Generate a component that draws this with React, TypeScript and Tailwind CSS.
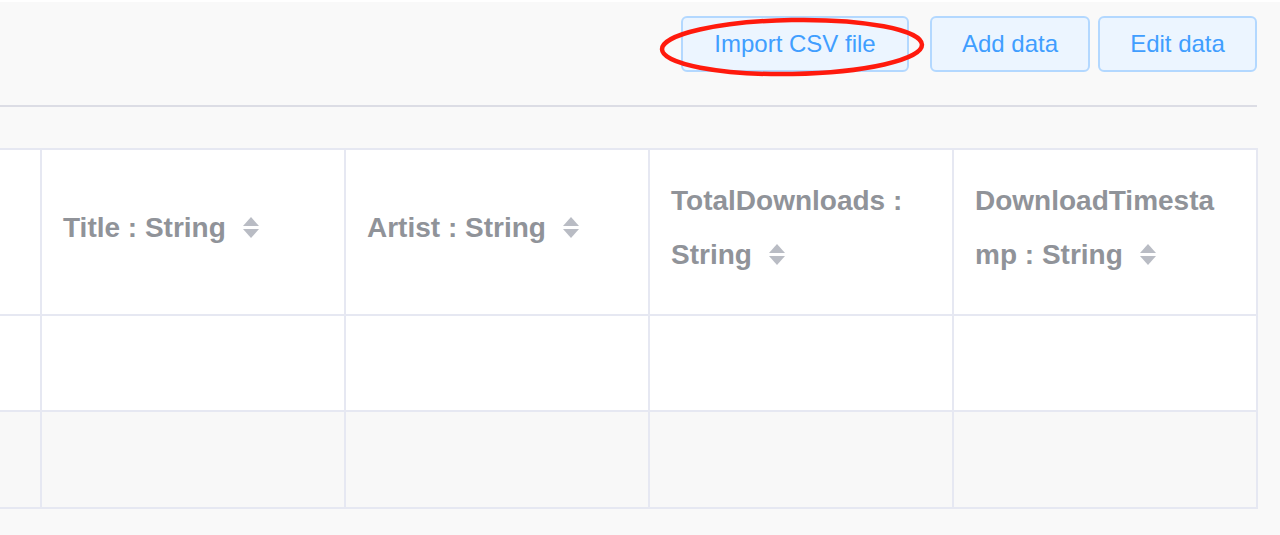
import React from "react";

const Caret = () => (
  <span className="inline-flex flex-col items-center ml-[17px] align-middle gap-[3px] translate-y-[-2px]">
    <svg width="16" height="9" viewBox="0 0 16 9"><polygon points="8,0 16,9 0,9" fill="#b9bcc4" /></svg>
    <svg width="16" height="9" viewBox="0 0 16 9"><polygon points="0,0 16,0 8,9" fill="#b9bcc4" /></svg>
  </span>
);

const headers: React.ReactNode[] = [
  <>Title : String<Caret /></>,
  <>Artist : String<Caret /></>,
  <>TotalDownloads :<br />String<Caret /></>,
  <>DownloadTimesta<br />mp : String<Caret /></>,
];

export default function App() {
  const font = { fontFamily: '"Liberation Sans", Arial, sans-serif' };
  return (
    <div className="w-[1280px] h-[535px] overflow-hidden bg-[#f9f9f9] border-t-2 border-white" style={font}>
      <div className="pr-[22px]">
        <div className="relative h-[103px] flex justify-end items-start pt-[14px] pr-[1px]">
          <button className="h-[56px] w-[228px] rounded-[6px] border-2 border-[#b3d8ff] bg-[#ecf5ff] text-[#409eff] text-[24px] leading-none">
            Import CSV file
          </button>
          <button className="ml-[21px] h-[56px] w-[160px] rounded-[6px] border-2 border-[#b3d8ff] bg-[#ecf5ff] text-[#409eff] text-[24px] leading-none">
            Add data
          </button>
          <button className="ml-[8px] h-[56px] w-[159px] rounded-[6px] border-2 border-[#b3d8ff] bg-[#ecf5ff] text-[#409eff] text-[24px] leading-none">
            Edit data
          </button>
          <svg className="absolute left-[656px] top-[12px] pointer-events-none" width="272" height="66" viewBox="0 0 272 66">
            <ellipse cx="136" cy="33" rx="130" ry="27" fill="none" stroke="#ff1a0d" strokeWidth="4.5" transform="rotate(-1 136 33)" />
          </svg>
        </div>
        <div className="h-[2px] bg-[#dcdde5] mr-[1px]" />
        <div className="h-[41px]" />
        <div className="w-[1258px] border-t-2 border-r-2 border-[#e6e8f2]">
          {/* header */}
          <div className="flex border-b-2 border-[#e6e8f2] bg-white h-[166px]">
            <div className="w-[40px] shrink-0" />
            {headers.map((h, i) => (
              <div key={i} className="w-[304px] shrink-0 border-l-2 border-[#e6e8f2] flex items-center pl-[21px] pb-[8px]">
                <div className="text-[28px] leading-[54px] font-bold text-[#909399]">{h}</div>
              </div>
            ))}
          </div>
          {/* row 1 */}
          <div className="flex border-b-2 border-[#e6e8f2] bg-white h-[96px]">
            <div className="w-[40px] shrink-0" />
            {[0, 1, 2, 3].map((i) => (
              <div key={i} className="w-[304px] shrink-0 border-l-2 border-[#e6e8f2]" />
            ))}
          </div>
          {/* row 2 */}
          <div className="flex border-b-2 border-[#e6e8f2] bg-[#f8f8f8] h-[97px]">
            <div className="w-[40px] shrink-0" />
            {[0, 1, 2, 3].map((i) => (
              <div key={i} className="w-[304px] shrink-0 border-l-2 border-[#e6e8f2]" />
            ))}
          </div>
        </div>
      </div>
    </div>
  );
}
